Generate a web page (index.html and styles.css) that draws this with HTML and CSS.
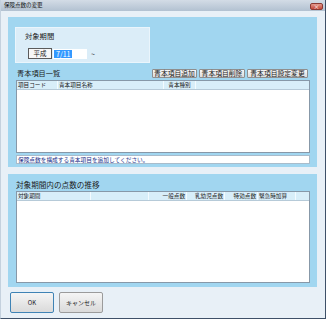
FILE: index.html
```html
<!DOCTYPE html>
<html lang="ja">
<head>
	<meta charset="UTF-8">
	<title>保険点数の変更</title>
	<link rel="stylesheet" href="styles.css">
</head>
<body>
	<div class="window">
		<div class="titlebar">
			<span class="title">保険点数の変更</span>
			<span class="close">×</span>
		</div>
		<div class="content">
			<section class="panel panel-top">
				<div class="period-box">
					<div class="period-label">対象期間</div>
					<div class="period-row">
						<span class="era">平成</span>
						<span class="date-input"><span class="selected">7/11</span></span>
						<span class="tilde">~</span>
					</div>
				</div>
				<div class="list-bar">
					<span class="section-label">青本項目一覧</span>
					<div class="list-buttons">
						<button class="small-btn w-add">青本項目追加</button>
						<button class="small-btn w-del">青本項目削除</button>
						<button class="small-btn w-set">青本項目設定変更</button>
					</div>
				</div>
				<div class="grid grid-items">
					<div class="grid-head">
						<span class="col c-code">項目コード</span>
						<span class="col c-name">青本項目名称</span>
						<span class="col c-kind center">青本種別</span>
					</div>
					<div class="grid-body"></div>
				</div>
				<div class="info-line">保険点数を構成する青本項目を追加してください。</div>
			</section>
			<section class="panel panel-bottom">
				<div class="section-label big">対象期間内の点数の推移</div>
				<div class="grid grid-points">
					<div class="grid-head">
						<span class="col p-period">対象期間</span>
						<span class="col p-blank"></span>
						<span class="col p-num right">一般点数</span>
						<span class="col p-num right">乳幼児点数</span>
						<span class="col p-spec right">特効点数</span>
						<span class="col p-num">緊急時加算</span>
					</div>
					<div class="grid-body"></div>
				</div>
			</section>
			<div class="footer">
				<button class="dlg-btn ok">OK</button>
				<button class="dlg-btn">キャンセル</button>
			</div>
		</div>
	</div>
</body>
</html>
```

FILE: styles.css
```css
* {
	box-sizing: border-box;
}
body {
	margin: 0;
	background: #fff;
	font-family: "Noto Sans CJK JP", "DejaVu Sans", sans-serif;
	color: #1a1a1a;
}
.window {
	width: 326px;
	height: 319px;
	background: #e8f0f7;
	border-left: 1px solid #c4d1de;
	border-right: 1px solid #3e5068;
	border-bottom: 1px solid #3e5068;
	display: flex;
	flex-direction: column;
}
.titlebar {
	height: 11px;
	display: flex;
	align-items: center;
	justify-content: space-between;
	padding: 0 2px 0 3px;
	background: linear-gradient(#d3dce6, #b2c1d1);
}
.title {
	font-size: 5.5px;
	line-height: 11px;
	color: #111;
}
.close {
	width: 13px;
	height: 7px;
	margin-top: 1px;
	background: linear-gradient(#e39a8e, #c4473a);
	border: 1px solid #8b3a33;
	border-radius: 2px;
	color: #fff;
	font-size: 6px;
	line-height: 5px;
	text-align: center;
}
.content {
	padding: 6px 8px 0 7px;
	flex: 1;
	display: flex;
	flex-direction: column;
}
.panel {
	background: #a1d6f0;
	padding: 0 7px;
}
.panel-top {
	height: 150px;
	padding-top: 10px;
}
.panel-bottom {
	height: 113px;
	margin-top: 7px;
	padding-top: 4px;
}
.period-box {
	width: 135px;
	height: 36px;
	background: #dbedf8;
	border: 1px solid #eaf5fc;
	padding: 3px 0 0 9px;
}
.period-label {
	font-size: 7.3px;
	line-height: 10px;
}
.period-row {
	display: flex;
	align-items: center;
	margin-top: 7px;
	padding-left: 3px;
}
.era {
	width: 24px;
	height: 11px;
	border: 1px solid #5b5b5b;
	background: #f7f7f7;
	font-size: 6.5px;
	line-height: 9px;
	text-align: center;
}
.date-input {
	width: 34px;
	height: 10px;
	margin-left: 1px;
	background: #fff;
	padding: 1px 1px;
	display: flex;
}
.selected {
	background: #3399ff;
	color: #fff;
	font-size: 7px;
	line-height: 8px;
	padding: 0 2px;
}
.tilde {
	font-size: 7px;
	margin-left: 4px;
	color: #333;
}
.list-bar {
	height: 10px;
	margin-top: 5px;
	display: flex;
	align-items: center;
	justify-content: space-between;
	padding-left: 2px;
	padding-right: 2px;
}
.section-label {
	font-size: 7.2px;
	line-height: 10px;
	color: #1b1b1b;
}
.section-label.big {
	font-size: 7.6px;
	line-height: 13px;
	height: 13px;
	padding-left: 1px;
}
.list-buttons {
	display: flex;
	gap: 2px;
}
.small-btn {
	height: 9px;
	padding: 0;
	font-family: inherit;
	font-size: 6.8px;
	line-height: 7px;
	color: #1b1b1b;
	background: linear-gradient(#f8f8f8, #dcdcdc);
	border: 1px solid #8f8f8f;
	border-radius: 1px;
}
.w-add { width: 45px; }
.w-del { width: 46px; }
.w-set { width: 61px; }
.grid {
	margin-left: 1px;
	width: 294px;
	border: 1px solid #8798a8;
	background: #fff;
	display: flex;
	flex-direction: column;
}
.grid-items {
	height: 73px;
	margin-top: 2px;
}
.grid-points {
	height: 92px;
}
.grid-head {
	height: 9px;
	display: flex;
	background: #d8eef9;
	border-bottom: 1px solid #b6cad8;
}
.col {
	font-size: 5.6px;
	line-height: 8px;
	padding: 0 1px;
	border-right: 1px solid #f4fbff;
	white-space: nowrap;
	overflow: hidden;
}
.center { text-align: center; }
.right { text-align: right; }
.c-code { width: 41px; }
.c-name { width: 106px; }
.c-kind { width: 32px; }
.p-period { width: 74px; }
.p-blank { width: 58px; }
.p-num { width: 38px; }
.p-spec { width: 33px; }
.grid-body {
	flex: 1;
}
.info-line {
	margin-top: 2px;
	margin-left: 1px;
	width: 294px;
	height: 9px;
	background: #fff;
	border: 1px solid #a9bccb;
	font-size: 5.7px;
	line-height: 7px;
	padding-left: 1px;
	color: #20308a;
}
.footer {
	display: flex;
	gap: 5px;
	padding: 5px 0 0 2px;
}
.dlg-btn {
	width: 44px;
	height: 21px;
	padding: 0;
	font-family: inherit;
	font-size: 6px;
	color: #222;
	background: linear-gradient(#f5f5f5, #dadada);
	border: 1px solid #9b9b9b;
	border-radius: 2px;
}
.dlg-btn.ok {
	border-color: #3f83b5;
}
```
